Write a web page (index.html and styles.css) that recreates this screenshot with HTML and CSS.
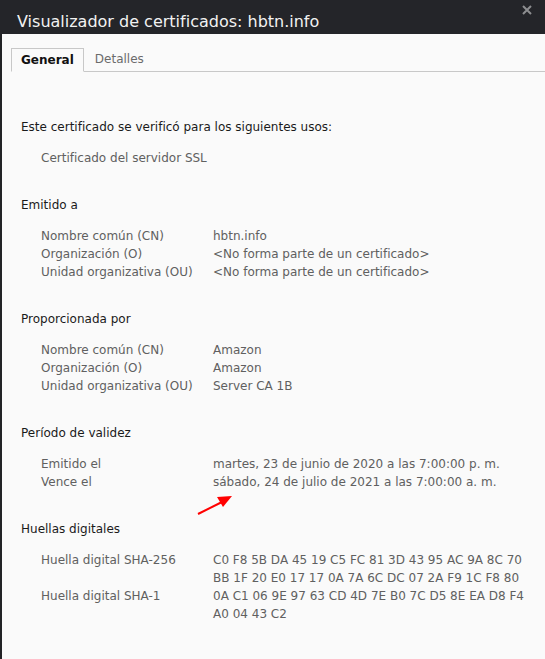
FILE: index.html
```html
<!DOCTYPE html>
<html lang="es">
<head>
<meta charset="utf-8">
<link rel="stylesheet" href="styles.css">
</head>
<body>
<div class="dialog">
  <header class="titlebar">
    <h1 class="title">Visualizador de certificados: hbtn.info</h1>
    <svg class="close" width="10" height="10" viewBox="0 0 10 10"><path d="M1 1L9 9M9 1L1 9" stroke="#8d8e90" stroke-width="2"/></svg>
  </header>
  <main class="content">
    <nav class="tabs">
      <div class="tab active">General</div>
      <div class="tab">Detalles</div>
    </nav>
    <section class="section first">
      <h2 class="heading">Este certificado se verificó para los siguientes usos:</h2>
      <div class="rows"><div class="row"><span class="label">Certificado del servidor SSL</span></div></div>
    </section>
    <section class="section">
      <h2 class="heading">Emitido a</h2>
      <div class="rows">
        <div class="row"><span class="label">Nombre común (CN)</span><span class="value">hbtn.info</span></div>
        <div class="row"><span class="label">Organización (O)</span><span class="value">&lt;No forma parte de un certificado&gt;</span></div>
        <div class="row"><span class="label">Unidad organizativa (OU)</span><span class="value">&lt;No forma parte de un certificado&gt;</span></div>
      </div>
    </section>
    <section class="section">
      <h2 class="heading">Proporcionada por</h2>
      <div class="rows">
        <div class="row"><span class="label">Nombre común (CN)</span><span class="value">Amazon</span></div>
        <div class="row"><span class="label">Organización (O)</span><span class="value">Amazon</span></div>
        <div class="row"><span class="label">Unidad organizativa (OU)</span><span class="value">Server CA 1B</span></div>
      </div>
    </section>
    <section class="section">
      <h2 class="heading">Período de validez</h2>
      <div class="rows">
        <div class="row"><span class="label">Emitido el</span><span class="value">martes, 23 de junio de 2020 a las 7:00:00 p. m.</span></div>
        <div class="row"><span class="label">Vence el</span><span class="value">sábado, 24 de julio de 2021 a las 7:00:00 a. m.</span></div>
      </div>
      <svg class="arrow" width="40" height="24" viewBox="0 0 40 24"><path d="M2 21L26 9" stroke="#f00" stroke-width="2"/><path d="M36 3L21 4L27 14Z" fill="#f00"/></svg>
    </section>
    <section class="section">
      <h2 class="heading">Huellas digitales</h2>
      <div class="rows">
        <div class="row"><span class="label">Huella digital SHA-256</span><span class="value">C0 F8 5B DA 45 19 C5 FC 81 3D 43 95 AC 9A 8C 70<br>BB 1F 20 E0 17 17 0A 7A 6C DC 07 2A F9 1C F8 80</span></div>
        <div class="row"><span class="label">Huella digital SHA-1</span><span class="value">0A C1 06 9E 97 63 CD 4D 7E B0 7C D5 8E EA D8 F4<br>A0 04 43 C2</span></div>
      </div>
    </section>
  </main>
</div>
</body>
</html>
```
FILE: styles.css
```css
* { box-sizing: border-box; }
html, body { margin: 0; padding: 0; }
body {
  width: 545px;
  height: 659px;
  overflow: hidden;
  background: #fafafa;
  font-family: "DejaVu Sans", sans-serif;
}
.dialog {
  height: 659px;
  border-left: 2px solid #222326;
  display: flex;
  flex-direction: column;
}
.titlebar {
  height: 34px;
  background: #242529;
  position: relative;
  margin-left: -2px;
  padding-left: 17px;
}
.title {
  margin: 0;
  font-weight: normal;
  font-size: 16px;
  color: #f2f2f2;
  line-height: 20px;
  padding-top: 12px;
}
.close {
  position: absolute;
  right: 13px;
  top: 5px;
}
.content {
  flex: 1;
  background: #fafafa;
  padding: 14px 0 0 0;
  position: relative;
}
.tabs {
  display: flex;
  margin-left: 9px;
  border-bottom: 1px solid #c8c8c8;
  height: 24px;
}
.tab {
  font-size: 12px;
  line-height: 22px;
  padding: 0 9px 0 11px;
  color: #6b6b6b;
}
.tab.active {
  font-weight: bold;
  color: #111;
  border: 1px solid #c8c8c8;
  border-bottom: 1px solid #fafafa;
  height: 24px;
  margin-bottom: -1px;
  background: #fafafa;
  padding: 0 9px;
}
.section {
  padding-left: 19px;
  position: relative;
}
.section.first { margin-top: 46px; }
.section + .section { margin-top: 29px; }
.heading {
  margin: 0;
  font-size: 12px;
  font-weight: normal;
  color: #1a1a1a;
  line-height: 18px;
}
.rows {
  margin-top: 13px;
  padding-left: 20px;
}
.row {
  display: flex;
  font-size: 12px;
  line-height: 18px;
  color: #606060;
}
.label { width: 172px; flex: none; }
.value { flex: none; }
.arrow {
  position: absolute;
  left: 194px;
  top: 69px;
}
```
